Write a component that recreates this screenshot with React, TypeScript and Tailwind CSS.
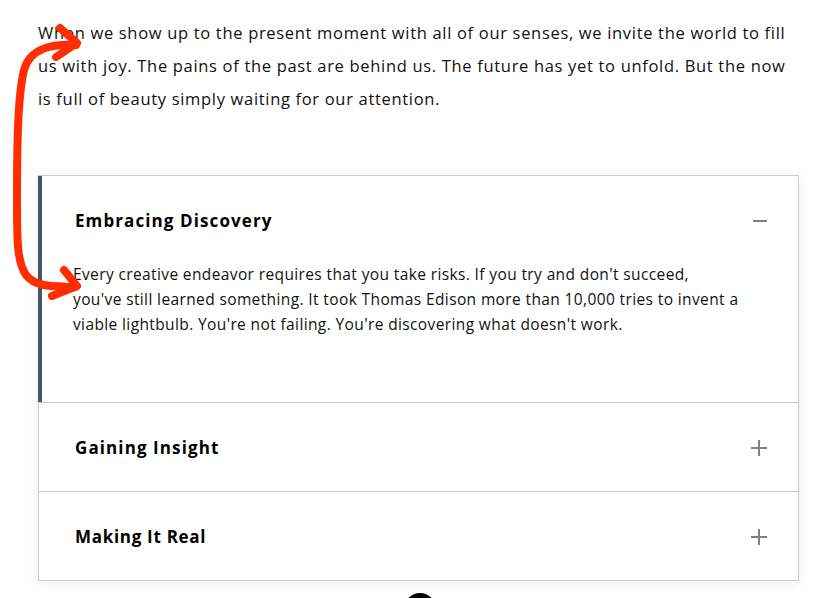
import React from "react";

const Minus = () => (
  <svg width="16" height="16" viewBox="0 0 16 16" className="shrink-0">
    <line x1="1" y1="8" x2="15" y2="8" stroke="#808080" strokeWidth="2" />
  </svg>
);

const Plus = () => (
  <svg width="18" height="18" viewBox="0 0 18 18" className="shrink-0">
    <line x1="1" y1="9" x2="17" y2="9" stroke="#808080" strokeWidth="2" />
    <line x1="9" y1="1" x2="9" y2="17" stroke="#808080" strokeWidth="2" />
  </svg>
);

export default function App() {
  const font = { fontFamily: '"Open Sans", "Liberation Sans", sans-serif' };
  return (
    <div className="relative w-[827px] h-[598px] overflow-hidden bg-white text-black" style={font}>
      <p className="pl-[38px] pr-[30px] pt-[16px] text-[16.5px] leading-[33px] tracking-[0.68px] text-[#111]">
        When we show up to the present moment with all of our senses, we invite the world to fill us with joy. The pains of the past are behind us. The future has yet to unfold. But the now is full of beauty simply waiting for our attention.
      </p>

      <div className="ml-[38px] mt-[60px] w-[761px] border-t border-r border-b border-[#cccccc] bg-white shadow-[0_2px_12px_rgba(0,0,0,0.07)]">
        <div className="border-l-4 border-[#475569]">
          <div className="flex items-center justify-between pl-[33px] pr-[30px] pt-[32px] pb-[18px]">
            <span className="text-[17px] font-bold leading-[26px] tracking-[1.1px]">Embracing Discovery</span>
            <Minus />
          </div>
          <div className="pl-[31px] pr-[36px] pt-[10px] pb-[65px] text-[15.5px] leading-[25px] tracking-[0.38px] text-[#111]">
            Every creative endeavor requires that you take risks. If you try and don't succeed,
            <br />
            you've still learned something. It took Thomas Edison more than 10,000 tries to invent a
            <br />
            viable lightbulb. You're not failing. You're discovering what doesn't work.
          </div>
        </div>
        <div className="flex h-[89px] items-center justify-between border-t border-l border-[#cccccc] pl-[36px] pr-[30px] pt-[2px]">
          <span className="text-[17px] font-bold leading-[26px] tracking-[1.1px]">Gaining Insight</span>
          <Plus />
        </div>
        <div className="flex h-[89px] items-center justify-between border-t border-l border-[#cccccc] pl-[36px] pr-[30px] pt-[2px]">
          <span className="text-[17px] font-bold leading-[26px] tracking-[0.7px]">Making It Real</span>
          <Plus />
        </div>
      </div>

      <div className="absolute left-[404px] top-[593px] h-[32px] w-[32px] rounded-full bg-black" />

      <svg className="pointer-events-none absolute left-0 top-0" width="120" height="320" viewBox="0 0 120 320">
        <g fill="none" stroke="#ff2d00" strokeWidth="8" strokeLinecap="round" strokeLinejoin="round">
          <path d="M76 45 C 52 44, 30 48, 24 70 C 18 95, 17 140, 17 200 C 17 240, 17 262, 26 275 C 36 288, 56 286, 75 287" />
          <path d="M60 28 L 77 43 L 56 57" />
          <path d="M64 270 L 77 286 L 52 296" />
        </g>
      </svg>
    </div>
  );
}
